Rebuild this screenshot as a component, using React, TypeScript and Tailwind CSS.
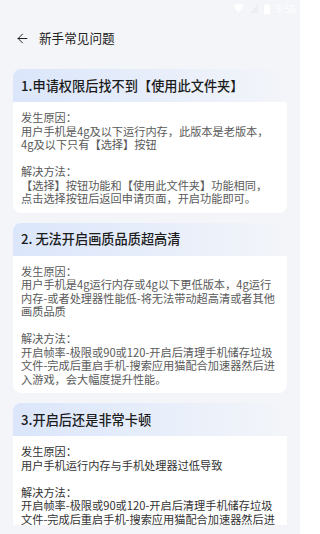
import React from 'react';
import { ArrowLeft } from 'lucide-react';

interface Faq {
  title: string;
  cause: string;
  solution: string;
  dark?: boolean;
}

const faqs: Faq[] = [
  {
    title: '1.申请权限后找不到【使用此文件夹】',
    cause: '用户手机是4g及以下运行内存，此版本是老版本，\n4g及以下只有【选择】按钮',
    solution: '【选择】按钮功能和【使用此文件夹】功能相同，\n点击选择按钮后返回申请页面，开启功能即可。',
  },
  {
    title: '2. 无法开启画质品质超高清',
    cause: '用户手机是4g运行内存或4g以下更低版本，4g运行内存-或者处理器性能低-将无法带动超高清或者其他画质品质',
    solution: '开启帧率-极限或90或120-开启后清理手机储存垃圾文件-完成后重启手机-搜索应用猫配合加速器然后进入游戏，会大幅度提升性能。',
  },
  {
    title: '3.开启后还是非常卡顿',
    cause: '用户手机运行内存与手机处理器过低导致',
    solution: '开启帧率-极限或90或120-开启后清理手机储存垃圾文件-完成后重启手机-搜索应用猫配合加速器然后进入游戏，会大幅度提升性能。',
    dark: true,
  },
];

const StatusBar = () => (
  <div className="h-[17px] flex items-center justify-end gap-[6px] pr-[4px] text-white">
    <svg width="11" height="9" viewBox="0 0 11 9">
      <path d="M0 1.5 Q5.5 -1.5 11 1.5 L5.5 9 Z" fill="#ffffff" />
    </svg>
    <svg width="8" height="9" viewBox="0 0 8 9">
      <path d="M0 9 L8 9 L8 0 Z" fill="#eceef2" />
    </svg>
    <svg width="6" height="10" viewBox="0 0 6 10">
      <rect x="1.5" y="0" width="3" height="1.5" fill="#ffffff" />
      <rect x="0" y="1.2" width="6" height="8.8" rx="1" fill="#ffffff" />
    </svg>
    <span className="text-[10px] leading-none tracking-[0.2px]">3:56</span>
  </div>
);

const FaqCard = ({ faq }: { faq: Faq }) => (
  <div className="rounded-[8px] overflow-hidden bg-white shrink-0">
    <div className="h-[33px] px-[8px] flex items-center bg-gradient-to-r from-[#dbe6fb] to-[#f3f5f9] text-[13.2px] font-medium text-[#1c1c1c]">
      {faq.title}
    </div>
    <div
      className={`pl-[8px] pr-[6px] pt-[9px] pb-[7px] text-[11.2px] leading-[13.5px] whitespace-pre-line ${
        faq.dark ? 'text-[#333333]' : 'text-[#5a5a5a]'
      }`}
    >
      <div>发生原因：</div>
      <div>{faq.cause}</div>
      <div className="mt-[13.5px]">解决方法：</div>
      <div>{faq.solution}</div>
    </div>
  </div>
);

export default function App() {
  return (
    <div className="w-[300px] h-[534px] bg-[#f4f5f8] overflow-hidden font-['Noto_Sans_CJK_SC',sans-serif]">
      <StatusBar />
      <div className="h-[43px] flex items-center pl-[15px] gap-[9px] text-[#222222]">
        <ArrowLeft size={15} strokeWidth={1.6} />
        <span className="text-[12.6px]">新手常见问题</span>
      </div>
      <div className="h-[465px] overflow-hidden px-[13px] pt-[9px] flex flex-col gap-[10px]">
        {faqs.map((faq) => (
          <FaqCard key={faq.title} faq={faq} />
        ))}
      </div>
    </div>
  );
}
